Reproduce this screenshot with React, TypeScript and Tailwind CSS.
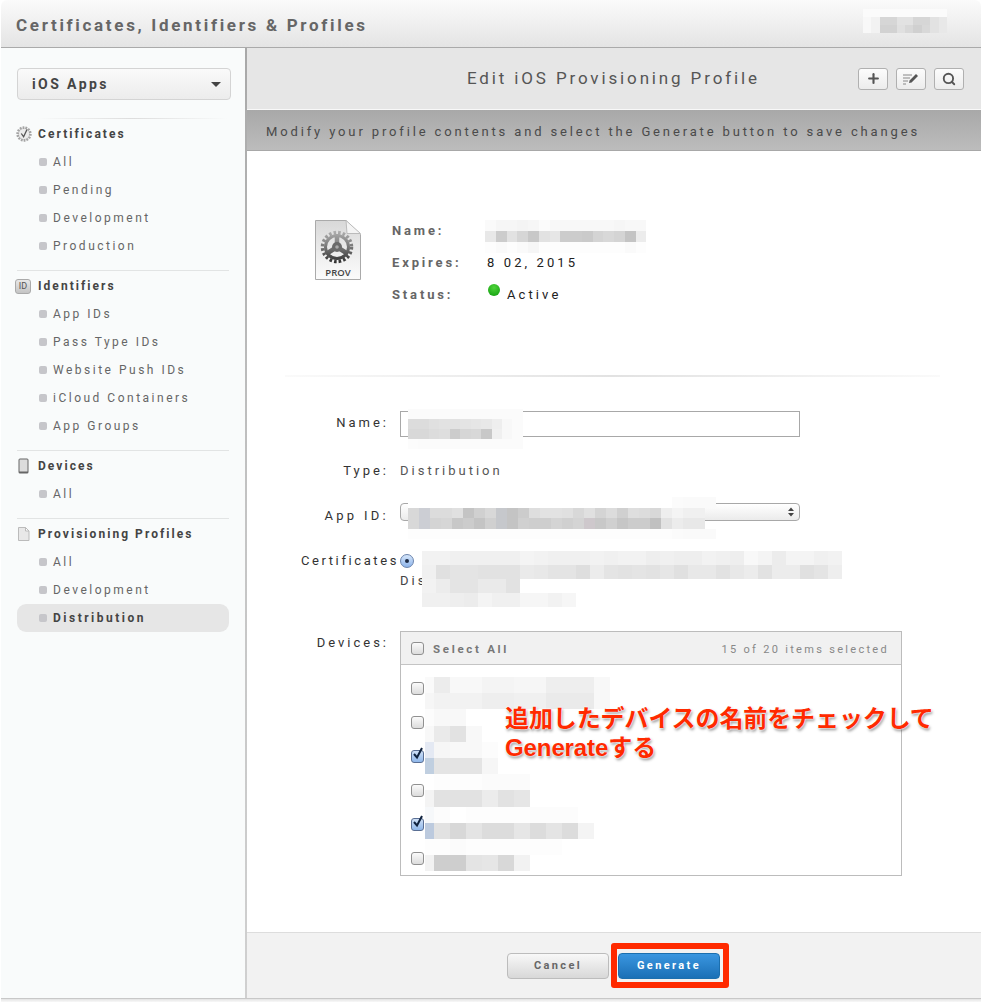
import { Plus, Search } from 'lucide-react';

const navGroups = [
  { title: 'Certificates', icon: 'gear', items: ['All', 'Pending', 'Development', 'Production'] },
  { title: 'Identifiers', icon: 'id', items: ['App IDs', 'Pass Type IDs', 'Website Push IDs', 'iCloud Containers', 'App Groups'] },
  { title: 'Devices', icon: 'device', items: ['All'] },
  { title: 'Provisioning Profiles', icon: 'doc', items: ['All', 'Development', 'Distribution'] },
];

// blurred-out regions of the screenshot, in page coordinates
const mosaics = [
  { x: 863, y: 9, cell: 8.4, h: 8, rows: ['fb fb fb fb fb fb fb fb fb fb', 'f8 f2 d6 d6 e2 e2 d6 d6 e2 e8', 'f8 f2 d2 d2 e0 d8 d0 d8 e2 e8'] },
  { x: 485, y: 220, cell: 10.75, h: 11, rows: ['fa f6 f6 f4 f6 fb f8 f8 f8 f8 f8 f8 f6 f8 f8', 'e8 cc e2 d6 c8 e2 e6 cc cc ca d4 d8 d4 c4 ec', 'fd fa fd fa f6 fd fd fd fd fd fd fd fd fa fd'] },
  { x: 408, y: 409, cell: 10.45, h: 10, rows: ['fb fb fb fb fb fb fb fb fb fb fb', 'dc dc e0 e2 e2 e4 e6 e8 ee f8 fb', 'd8 d8 dc de cc d6 d8 c8 f0 f8 fb', 'fc fb fb fb fb fb fb fb fb fb fb'] },
  { x: 408, y: 497, cell: 11, h: 10.5, rows: ['ff ff ff ff ff ff ff ff ff ff ff ff ff ff ff ff ff ff ff ff ff ff ff ff fb fa fa fa', 'd8 ccced4 dc dc e0 c4 d0 d8 c6c8cc c4 cc de e2 e2 e0 d8 e0 d4 dc d0 de dc d8 ee f4 f0 f0', 'd8 ccced4 d4 d6 c8 cc c4 d0 c6c8cc c4 d0 ce ce d4 d0 d4 cec8cc c8 d0 c6 cc cc c0 e2 ec e8 e8', 'fd fd fd fd fd fd fd fd fd fd fd fd fd fd fd fd fd fd fd fd fd fd fd fd fb fa fa fa'] },
  { x: 422, y: 551, cell: 14, h: 14, rows: ['f2 f2 f0 f0 f0 f0 f0 f4 f2 f0 f0 f0 f2 f0 f2 f2 ee f0 ee ee f2 f0 ee f8 f4 ec f4 f4 f0 f2', 'f0 e0 e4 e4 e2 e2 e2 ea e8 e4 e4 de ec e4 e2 e4 e2 e6 e0 e8 e8 e2 e8 ec e2 ec ec e0 e4 ee', 'f2 ec e4 e4 ea ea e2', 'f0 f0 ee ec f4 f0 f0 f6 f6 f2 f6'] },
  { x: 425, y: 677, cell: 16, first: 9, h: 16.2, rows: ['fa ec f8 f8 f4 f4 f6 f6 ee ee ee f8', 'f6 f2 f2 f2 ee ee f0 f0 ea ea ea f8', 'fc f8 f8 ff ff ff', 'f8 ea e2 f8 ff', 'e4e9f3 f6 f8 f8 fc', 'c0cfe0 e4 e4 e4 f6', 'ff fd fd fd fb fb fb', 'f4 e2 e2 e2 ec e2 e6', 'f6f8fa fc ff fd fd fd fd fc fc fc', 'bccade e2 d8 e4 dc dc e6 dc e4 dc f4', 'fd fd fb fd fd fd fd fd fd', 'f2 ce ce e4 e6 d8 f2'] },
];

function grey(v: string) {
  return v.length === 2 ? `#${v}${v}${v}` : `#${v}`;
}

function Mosaic({ x, y, cell, h, first, rows }: { x: number; y: number; cell: number; h: number; first?: number; rows: string[] }) {
  return (
    <div className="absolute" style={{ left: x, top: y }}>
      {rows.map((row, i) => (
        <div key={i} className="flex" style={{ height: h }}>
          {row.split(' ').map((v, j) => (
            <div key={j} style={{ width: j === 0 && first ? first : cell, background: grey(v) }} />
          ))}
        </div>
      ))}
    </div>
  );
}

function NavIcon({ kind }: { kind: string }) {
  if (kind === 'gear') {
    return (
      <svg width="16" height="16" viewBox="0 0 16 16" className="-ml-px">
        <circle cx="8" cy="8" r="6.4" fill="#d8d8d8" stroke="#a4a4a4" strokeWidth="2.6" strokeDasharray="1.7 1.1" />
        <circle cx="8" cy="8" r="5" fill="#ebebeb" />
        <path d="M5.3 7.5 L7.6 10.8 L11 3.4" fill="none" stroke="#555" strokeWidth="1.3" />
      </svg>
    );
  }
  if (kind === 'id') {
    return (
      <div className="-ml-[2px] h-[15px] w-[16px] rounded-[3px] border border-[#aaa] bg-gradient-to-b from-[#e8e8e8] to-[#c4c4c4] text-center text-[9px] leading-[13px] text-[#555]">
        ID
      </div>
    );
  }
  if (kind === 'device') {
    return (
      <svg width="14" height="16" viewBox="0 0 14 16">
        <rect x="1.5" y="0.5" width="10" height="15" rx="1.5" fill="#666" />
        <rect x="2.5" y="1.5" width="8" height="12" fill="#dcdcdc" />
      </svg>
    );
  }
  return (
    <svg width="14" height="16" viewBox="0 0 14 16">
      <path d="M1.5 1.5 H8.5 L12 5 V14.5 H1.5 Z" fill="#e8e8e8" stroke="#bbb" />
      <path d="M8.5 1.5 V5 H12 Z" fill="#fff" stroke="#bbb" />
    </svg>
  );
}

function ProvIcon() {
  return (
    <svg width="48" height="62" viewBox="0 0 48 62">
      <defs>
        <linearGradient id="paper" x1="0" y1="0" x2="0" y2="1">
          <stop offset="0" stopColor="#d8d8d8" />
          <stop offset="0.7" stopColor="#f2f2f2" />
          <stop offset="1" stopColor="#fbfbfb" />
        </linearGradient>
        <linearGradient id="gear" gradientUnits="userSpaceOnUse" x1="0" y1="10" x2="0" y2="44">
          <stop offset="0" stopColor="#b4b4b4" />
          <stop offset="0.5" stopColor="#777" />
          <stop offset="1" stopColor="#2a2a2a" />
        </linearGradient>
      </defs>
      <path d="M1.5 0.5 H32 L46.5 14.5 V59.5 H1.5 Z" fill="url(#paper)" stroke="#aaa" />
      <path d="M32 0.5 L33 13.5 H46.5 Z" fill="#f4f4f4" stroke="#bbb" />
      <circle cx="23" cy="27" r="14.5" fill="none" stroke="url(#gear)" strokeWidth="3.5" strokeDasharray="2.6 2" />
      <circle cx="23" cy="27" r="11.5" fill="none" stroke="url(#gear)" strokeWidth="3" />
      <path d="M23 27 L23 14 M23 27 L34 34 M23 27 L12 34" stroke="url(#gear)" strokeWidth="4.5" />
      <circle cx="23" cy="27" r="5" fill="#6a6a6a" />
      <circle cx="23" cy="27" r="1.8" fill="#aaa" />
      <text x="24" y="56" textAnchor="middle" fontSize="9.5" fontWeight="600" fill="#444" fontFamily="'Open Sans', sans-serif">PROV</text>
    </svg>
  );
}

function Check({ on }: { on?: boolean }) {
  if (!on) {
    return <div className="h-[13px] w-[13px] rounded-[3px] border border-[#909090] bg-gradient-to-b from-[#fbfbfb] to-[#dcdcdc]" />;
  }
  return (
    <div className="relative h-[13px] w-[13px] rounded-[3px] border border-[#5a6f94] bg-gradient-to-b from-[#cfe0f6] to-[#8fb7ea]">
      <svg width="14" height="16" viewBox="0 0 14 16" className="absolute -left-[1px] -top-[5px]">
        <path d="M3 8 L6 11.5 L11 2" fill="none" stroke="#10233f" strokeWidth="2" />
      </svg>
    </div>
  );
}

function ToolButton({ children }: { children: React.ReactNode }) {
  return (
    <div className="flex h-[22px] w-[30px] items-center justify-center rounded-[3px] border border-[#b0b0b0] bg-gradient-to-b from-[#fcfcfc] to-[#ececec]">
      {children}
    </div>
  );
}

export default function App() {
  return (
    <div className="relative h-[1002px] w-[981px] overflow-hidden bg-white pl-px font-['Roboto',sans-serif]">
      {/* Top bar */}
      <header className="flex h-[48px] items-center rounded-t-[6px] border-b border-[#aaaaaa] bg-gradient-to-b from-[#fbfbfb] to-[#e4e4e4] pl-[15px] pt-[5px]">
        <span className="text-[17px] font-bold tracking-[2.68px] text-[#666666]">Certificates, Identifiers &amp; Profiles</span>
      </header>

      <div className="flex h-[951px] border-b border-[#c8c8c8]">
        {/* Sidebar */}
        <aside className="w-[244px] shrink-0 bg-[#f9fbfb] px-[16px] pt-[20px]">
          <div className="flex h-[32px] w-[214px] items-center justify-between rounded-[4px] border border-[#d4d4d4] bg-gradient-to-b from-[#fafafa] to-[#ececec] pl-[14px] pr-[9px]">
            <span className="text-[14px] font-bold tracking-[2.4px] text-[#444444]">iOS Apps</span>
            <svg width="10" height="5" viewBox="0 0 10 5"><path d="M0 0 H10 L5 5 Z" fill="#444" /></svg>
          </div>
          <div className="ml-[20px] mt-[18px] h-px w-[191px] bg-gradient-to-r from-[#f9fbfb] via-[#dddddd] to-[#f9fbfb]" />
          {navGroups.map((group, i) => (
            <div key={group.title} className={i === 0 ? '' : 'mt-[10px] border-t border-[#e2e4e4]'}>
              <div className="mt-px flex h-[28px] items-center">
                <div className="flex w-[21px] justify-start">
                  <NavIcon kind={group.icon} />
                </div>
                <span className="text-[12px] font-bold tracking-[2.05px] text-[#444444]">{group.title}</span>
              </div>
              {group.items.map((item) => {
                const active = group.icon === 'doc' && item === 'Distribution';
                return (
                  <div key={item} className={`flex h-[28px] w-[212px] items-center pl-[22px] ${active ? 'rounded-[9px] bg-[#e6e6e6]' : ''}`}>
                    <span className="mr-[6px] h-[8px] w-[8px] rounded-[2px] bg-[#c6c6ca]" />
                    <span className={`text-[12px] tracking-[2.5px] ${active ? 'font-bold text-[#444444]' : 'text-[#666666]'}`}>{item}</span>
                  </div>
                );
              })}
            </div>
          ))}
        </aside>
        <div className="w-[2px] shrink-0 bg-gradient-to-b from-[#a8a8a8] via-[#c4c4c4] to-[#d0d0d0]" />

        {/* Main column */}
        <main className="flex min-w-0 flex-1 flex-col">
          <div className="flex h-[62px] shrink-0 items-center border-b border-[#f8f8f8] bg-[#e6e6e6] pl-[220px] pr-[17px]">
            <h1 className="text-[17px] tracking-[2.86px] text-[#555555]">Edit iOS Provisioning Profile</h1>
            <div className="ml-auto flex gap-[8px]">
              <ToolButton><Plus size={15} strokeWidth={3.4} color="#555" /></ToolButton>
              <ToolButton>
                <svg width="18" height="14" viewBox="0 0 18 14">
                  <path d="M1 3 H10 M1 6 H8 M1 9 H6 M1 12 H4" stroke="#888" strokeWidth="1" />
                  <path d="M7 11 L7.6 8.4 L14 2 L16 4 L9.6 10.4 Z" fill="#555" />
                </svg>
              </ToolButton>
              <ToolButton><Search size={14} strokeWidth={3.2} color="#555" /></ToolButton>
            </div>
          </div>
          <div className="flex h-[41px] shrink-0 items-center border-b border-[#a8a8a8] bg-gradient-to-b from-[#a8a8a8] to-[#bcbcbc] pl-[19px] pt-[4px]">
            <span className="text-[13px] tracking-[2.86px] text-[#4a4a4a]">Modify your profile contents and select the Generate button to save changes</span>
          </div>

          <div className="flex-1 bg-white pt-[64px]">
            {/* Profile summary */}
            <div className="flex pl-[67px]">
              <div className="mt-[5px]"><ProvIcon /></div>
              <div className="ml-[30px]">
                <div className="flex h-[32px] items-center text-[13px] font-bold tracking-[2.85px] text-[#666666]">Name:</div>
                <div className="flex h-[32px] items-center">
                  <span className="w-[95px] text-[13px] font-bold tracking-[2.85px] text-[#666666]">Expires:</span>
                  <span className="text-[13px] tracking-[3.1px] text-[#222222]">8 02, 2015</span>
                </div>
                <div className="flex h-[32px] items-center">
                  <span className="w-[96px] text-[13px] font-bold tracking-[2.85px] text-[#666666]">Status:</span>
                  <span className="-mt-[10px] h-[12px] w-[12px] rounded-full bg-[radial-gradient(circle_at_50%_30%,#4fd43a,#0c9a0c)]" />
                  <span className="ml-[7px] text-[13px] tracking-[3.1px] text-[#222222]">Active</span>
                </div>
              </div>
            </div>
            <div className="ml-[38px] mt-[64px] h-[2px] w-[655px] bg-gradient-to-r from-[#fafafa] via-[#e2e2e2] to-[#fafafa]" />

            {/* Form */}
            <div className="mt-[34px] flex h-[26px]">
              <div className="w-[142px] shrink-0 pt-[4px] text-right text-[13px] leading-[16px] tracking-[3px] text-[#333333]">Name:</div>
              <div className="ml-[11px] h-[26px] w-[400px] border border-[#a8a8a8] bg-white" />
            </div>
            <div className="mt-[25px] flex h-[16px]">
              <div className="w-[142px] shrink-0 pt-px text-right text-[13px] leading-[16px] tracking-[3px] text-[#333333]">Type:</div>
              <div className="ml-[11px] pt-px text-[13px] leading-[16px] tracking-[3px] text-[#555555]">Distribution</div>
            </div>
            <div className="mt-[25px] flex h-[20px]">
              <div className="w-[142px] shrink-0 pt-[5px] text-right text-[13px] leading-[16px] tracking-[3.3px] text-[#333333]">App ID:</div>
              <div className="ml-[11px] flex h-[18px] w-[400px] items-center justify-end rounded-[4px] border border-[#a8a8a8] bg-gradient-to-b from-white to-[#ebebeb] pr-[5px]">
                <svg width="6" height="10" viewBox="0 0 6 10"><path d="M0 4 L3 0.5 L6 4 Z M0 6 L3 9.5 L6 6 Z" fill="#444" /></svg>
              </div>
            </div>
            <div className="mt-[29px] flex h-[79px]">
              <div className="w-[152px] shrink-0 pt-px text-right text-[13px] leading-[16px] tracking-[2.6px] text-[#333333]">Certificates</div>
              <div className="ml-[1px] mt-[2px] flex h-[14px] w-[14px] items-center justify-center rounded-full border border-[#6b84ad] bg-gradient-to-b from-[#d6e6fa] to-[#8db4ea]">
                <span className="h-[4px] w-[4px] rounded-full bg-[#1c2a44]" />
              </div>
              <div className="-ml-[14px] mt-[21px] text-[13px] leading-[16px] tracking-[3px] text-[#444444]">Dis</div>
            </div>
            <div className="flex">
              <div className="w-[142px] shrink-0 pt-[4px] text-right text-[13px] leading-[16px] tracking-[3px] text-[#333333]">Devices:</div>
              <div className="ml-[11px] h-[245px] w-[502px] border border-[#bcbcbc] bg-white">
                <div className="flex h-[33px] items-center border-b border-[#c4c4c4] bg-[#f1f1f1] pl-[10px] pr-[12px]">
                  <Check />
                  <span className="ml-[9px] pt-[4px] text-[11.5px] font-bold tracking-[2.7px] text-[#777777]">Select All</span>
                  <span className="ml-auto pt-[4px] text-[11px] tracking-[2.3px] text-[#888888]">15 of 20 items selected</span>
                </div>
                <div className="pl-[10px] pt-[6px]">
                  {[false, false, true, false, true, false].map((on, i) => (
                    <div key={i} className="flex h-[34px] items-center"><Check on={on} /></div>
                  ))}
                </div>
              </div>
            </div>
          </div>

          {/* Footer */}
          <div className="flex h-[66px] shrink-0 items-center justify-center gap-[9px] border-t border-[#dddddd] bg-[#f2f2f2] pr-[1px]">
            <button className="h-[26px] w-[102px] rounded-[4px] border border-[#bcbcbc] bg-gradient-to-b from-[#f8f8f8] to-[#d8d8d8] pt-[1px] text-[11px] font-bold tracking-[2.4px] text-[#666666]">Cancel</button>
            <div className="relative">
              <button className="h-[26px] w-[102px] rounded-[4px] border border-[#1c6fae] bg-gradient-to-b from-[#3a96e0] to-[#1a70b6] pt-[1px] text-[11px] font-bold tracking-[2.4px] text-white">Generate</button>
              <div className="absolute -bottom-[9px] -left-[7px] -right-[9px] -top-[9px] rounded-[3px] border-[6px] border-[#ff2a00]" />
            </div>
          </div>
        </main>
      </div>
      <div className="h-[3px] bg-gradient-to-b from-[#e4e4e4] to-[#f8f8f8]" />

      {/* Blurred regions and callout drawn over the page */}
      {mosaics.map((m) => (
        <Mosaic key={`${m.x}-${m.y}`} {...m} />
      ))}
      <div className="absolute left-[505px] top-[704px] whitespace-nowrap font-['Liberation_Sans','Noto_Sans_CJK_JP',sans-serif] text-[24px] font-bold leading-[29px] tracking-[-0.1px] text-[#ff2a00] [text-shadow:0_0_2px_#fff,0_0_2px_#fff,1px_2px_3px_rgba(0,0,0,0.45)]">
        追加したデバイスの名前をチェックして
        <br />
        Generateする
      </div>
    </div>
  );
}
